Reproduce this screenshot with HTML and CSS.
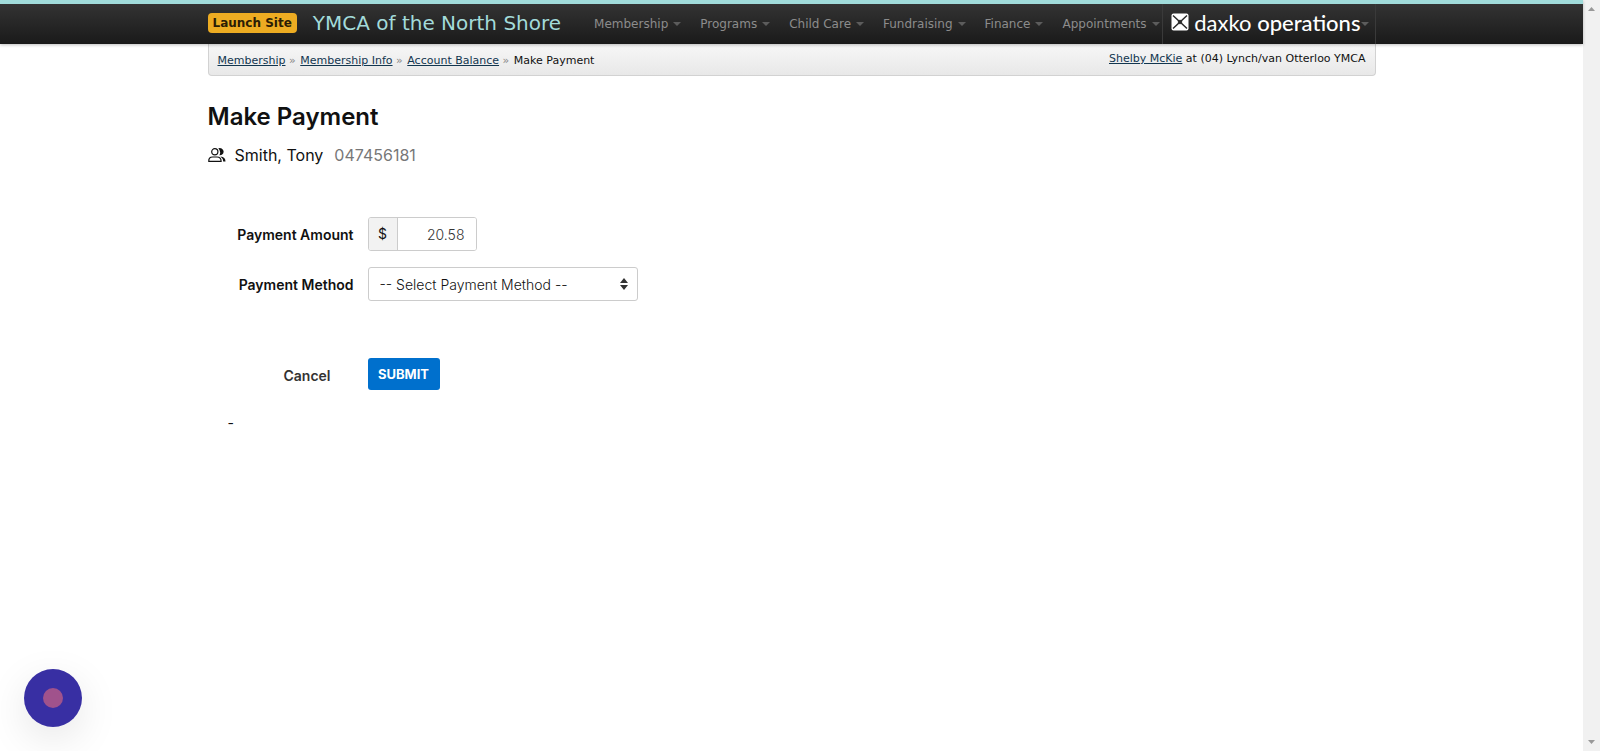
FILE: index.html
```html
<!DOCTYPE html>
<html lang="en">
<head>
    <meta charset="UTF-8">
    <meta name="viewport" content="width=device-width, initial-scale=1.0">
    <title>Make Payment</title>
    <link rel="stylesheet" href="styles.css">
</head>
<body>

<div class="page">
    <header class="topbar">
        <div class="container topbar-inner">
            <a class="launch" href="#">Launch Site</a>
            <a class="site-name" href="#">YMCA of the North Shore</a>
            <nav class="menu">
                <a href="#">Membership</a>
                <a href="#">Programs</a>
                <a href="#">Child Care</a>
                <a href="#">Fundraising</a>
                <a href="#">Finance</a>
                <a href="#">Appointments</a>
            </nav>
            <a class="brand" href="#">
                <svg class="brand-mark" viewBox="0 0 18 18" width="18" height="18" aria-hidden="true">
                    <rect x="0.500" y="0.500" width="17" height="17" rx="2" fill="#fff"/>
                    <path stroke="#292929" stroke-width="1.500" d="M2 2.500l14 13M16 2.500l-14 13"/>
                    <path fill="#292929" d="M9 6.500l2.500 2.500L9 11.500 6.500 9z"/>
                </svg>
                <span class="brand-text">daxko <b>operations</b></span>
            </a>
        </div>
    </header>

    <div class="container">
        <div class="crumb-bar">
            <div class="crumbs">
                <a href="#">Membership</a> <i>»</i>
                <a href="#">Membership Info</a> <i>»</i>
                <a href="#">Account Balance</a> <i>»</i>
                <span>Make Payment</span>
            </div>
            <div class="user"><a href="#">Shelby McKie</a> at (04) Lynch/van Otterloo YMCA</div>
        </div>

        <main>
            <h1>Make Payment</h1>
            <div class="member">
                <svg viewBox="0 0 18 16" width="18" height="16" aria-hidden="true">
                    <path d="M10.300 1.300a3.700 3.700 0 1 1 1 7q2.200-3.500-1-7zM12.500 9.500q5 .5 5 5h-2.300q0-3-2.700-5z" fill="#111"/>
                    <circle cx="6.800" cy="4.800" r="3.100" fill="none" stroke="#111" stroke-width="1.200"/>
                    <path d="M.8 14.300q-.3-4.300 3.700-4.300h4.600q4 0 4 4.300z" fill="none" stroke="#111" stroke-width="1.200"/>
                </svg>
                <span class="member-name">Smith, Tony</span>
                <span class="member-id">047456181</span>
            </div>

            <form class="payment">
                <label for="amount">Payment Amount</label>
                <div class="amount">
                    <span>$</span>
                    <input type="text" id="amount" value="20.58">
                </div>

                <label for="method">Payment Method</label>
                <div class="method">
                    <select id="method">
                        <option>-- Select Payment Method --</option>
                    </select>
                    <svg viewBox="0 0 8 12" width="8" height="12" aria-hidden="true">
                        <path d="M4 0l4 5H0zM0 7h8l-4 5z" fill="#333"/>
                    </svg>
                </div>

                <div class="cancel"><a href="#">Cancel</a></div>
                <div class="submit"><button type="button">SUBMIT</button></div>
            </form>

            <p class="note">-</p>
        </main>
    </div>
</div>

<div class="scrollbar" aria-hidden="true">
    <svg viewBox="0 0 7 4" width="7" height="4"><path d="M3.500 0L7 4H0z" fill="#999"/></svg>
    <svg viewBox="0 0 7 4" width="7" height="4"><path d="M0 0h7L3.500 4z" fill="#999"/></svg>
</div>

<button class="recorder" type="button" aria-label="Record"><span></span></button>

</body>
</html>
```

FILE: styles.css
```css
* {
    box-sizing: border-box;
}
body {
    display: flex;
    min-height: 100vh;
    margin: 0;
    background: #fff;
    color: #111;
    font-family: Inter, "Liberation Sans", sans-serif;
}
.page {
    flex: 1;
}
.container {
    max-width: 1168px;
    margin: 0 auto;
}

/* top bar */
.topbar {
    border-top: 4px solid #a0dbda;
    background: linear-gradient(#333, #1a1a1a);
    box-shadow: 0 1px 3px rgba(0, 0, 0, 0.25);
    font-family: Verdana, "DejaVu Sans", sans-serif;
    position: relative;
}
.topbar-inner {
    display: flex;
    align-items: center;
    height: 40px;
}
.topbar a {
    text-decoration: none;
    white-space: nowrap;
}
.launch {
    height: 20px;
    margin-bottom: 2px;
    padding: 0 5px;
    border-radius: 4px;
    background: #edac22;
    color: #2b1d05;
    font-size: 12px;
    font-weight: bold;
    line-height: 20px;
}
.site-name {
    margin-left: 16px;
    color: #a3dbda;
    font-size: 20px;
    line-height: 38px;
    align-self: flex-start;
}
.menu {
    display: flex;
    gap: 19px;
    margin-left: 33px;
}
.menu a {
    display: flex;
    align-items: center;
    gap: 5px;
    color: #8c8c8c;
    font-size: 12px;
}
.menu a::after,
.brand::after {
    content: "";
    border: 4px solid transparent;
    border-top-color: #5c5c5c;
    border-bottom: 0;
}
.brand {
    display: flex;
    align-items: center;
    height: 40px;
    margin-left: auto;
    padding: 0 6px 0 8px;
    border-left: 1px solid #3a3a3a;
    border-right: 1px solid #3a3a3a;
    color: #fff;
}
.brand-mark {
    margin: 0 5px 4px 0;
}
.brand-text {
    padding-bottom: 2px;
    font-family: Lato, sans-serif;
    font-size: 22px;
    line-height: 30px;
}
.brand-text b {
    font-weight: 500;
}

/* breadcrumbs */
.crumb-bar {
    display: flex;
    justify-content: space-between;
    height: 32px;
    padding: 0 9px;
    border: 1px solid #d2d2d2;
    border-top: 0;
    border-radius: 0 0 4px 4px;
    background: linear-gradient(#f7f7f7, #e8e8e8);
    font-family: Verdana, "DejaVu Sans", sans-serif;
    font-size: 11px;
    line-height: 34px;
}
.crumb-bar a {
    color: #12364f;
}
.crumbs i {
    margin-right: 1px;
    color: #888;
    font-style: normal;
}
.user {
    line-height: 30px;
}

/* page head */
h1 {
    margin: 26px 0 0;
    font-size: 24px;
    font-weight: 600;
    line-height: 30px;
}
.member {
    display: flex;
    align-items: center;
    margin-top: 13px;
    font-size: 16px;
    line-height: 20px;
}
.member-name {
    margin: 0 11px 0 9px;
}
.member-id {
    color: #777;
}

/* payment form */
.payment {
    display: grid;
    grid-template-columns: 146px 1fr;
    gap: 16px 14px;
    margin-top: 52px;
    font-size: 14px;
}
.payment label {
    height: 34px;
    font-weight: 600;
    line-height: 36px;
    text-align: right;
}
.amount {
    display: flex;
    width: 109px;
    height: 34px;
    border: 1px solid #ccc;
    border-radius: 3px;
    overflow: hidden;
}
.amount span {
    width: 29px;
    border-right: 1px solid #ccc;
    background: #f2f2f2;
    line-height: 31px;
    text-align: center;
}
.amount input {
    flex: 1;
    min-width: 0;
    padding: 0 11px;
    border: 0;
    background: #fff;
    color: #333;
    font: inherit;
    font-weight: 300;
    text-align: right;
}
.method {
    position: relative;
    width: 270px;
}
.method select {
    width: 100%;
    height: 34px;
    padding: 0 11px;
    border: 1px solid #ccc;
    border-radius: 3px;
    background: #fff;
    color: #111;
    font: inherit;
    font-weight: 300;
    appearance: none;
}
.method svg {
    position: absolute;
    top: 11px;
    right: 10px;
    pointer-events: none;
}
.cancel {
    margin-top: 41px;
    padding-right: 23px;
    line-height: 36px;
    text-align: right;
}
.cancel a {
    color: #333;
    font-weight: 600;
    text-decoration: none;
}
.submit {
    margin-top: 41px;
}
.submit button {
    width: 72px;
    height: 32px;
    padding: 0;
    border: 0;
    border-radius: 3px;
    background: #0070cd;
    color: #fff;
    font-family: inherit;
    font-size: 13px;
    font-weight: 700;
    cursor: pointer;
}
.note {
    margin: 19px 0 0 20px;
    font-size: 14px;
    line-height: 20px;
}

/* window scroll bar */
.scrollbar {
    display: flex;
    flex-direction: column;
    justify-content: space-between;
    align-items: center;
    width: 17px;
    padding: 7px 0;
    background: #f1f1f1;
}

/* floating record button */
.recorder {
    position: fixed;
    left: 24px;
    bottom: 24px;
    display: flex;
    align-items: center;
    justify-content: center;
    width: 58px;
    height: 58px;
    border: 0;
    border-radius: 50%;
    background: #382fa3;
    box-shadow: 0 12px 40px rgba(0, 0, 0, 0.1);
    cursor: pointer;
}
.recorder span {
    width: 20px;
    height: 20px;
    border-radius: 50%;
    background: #a0528c;
}
```
